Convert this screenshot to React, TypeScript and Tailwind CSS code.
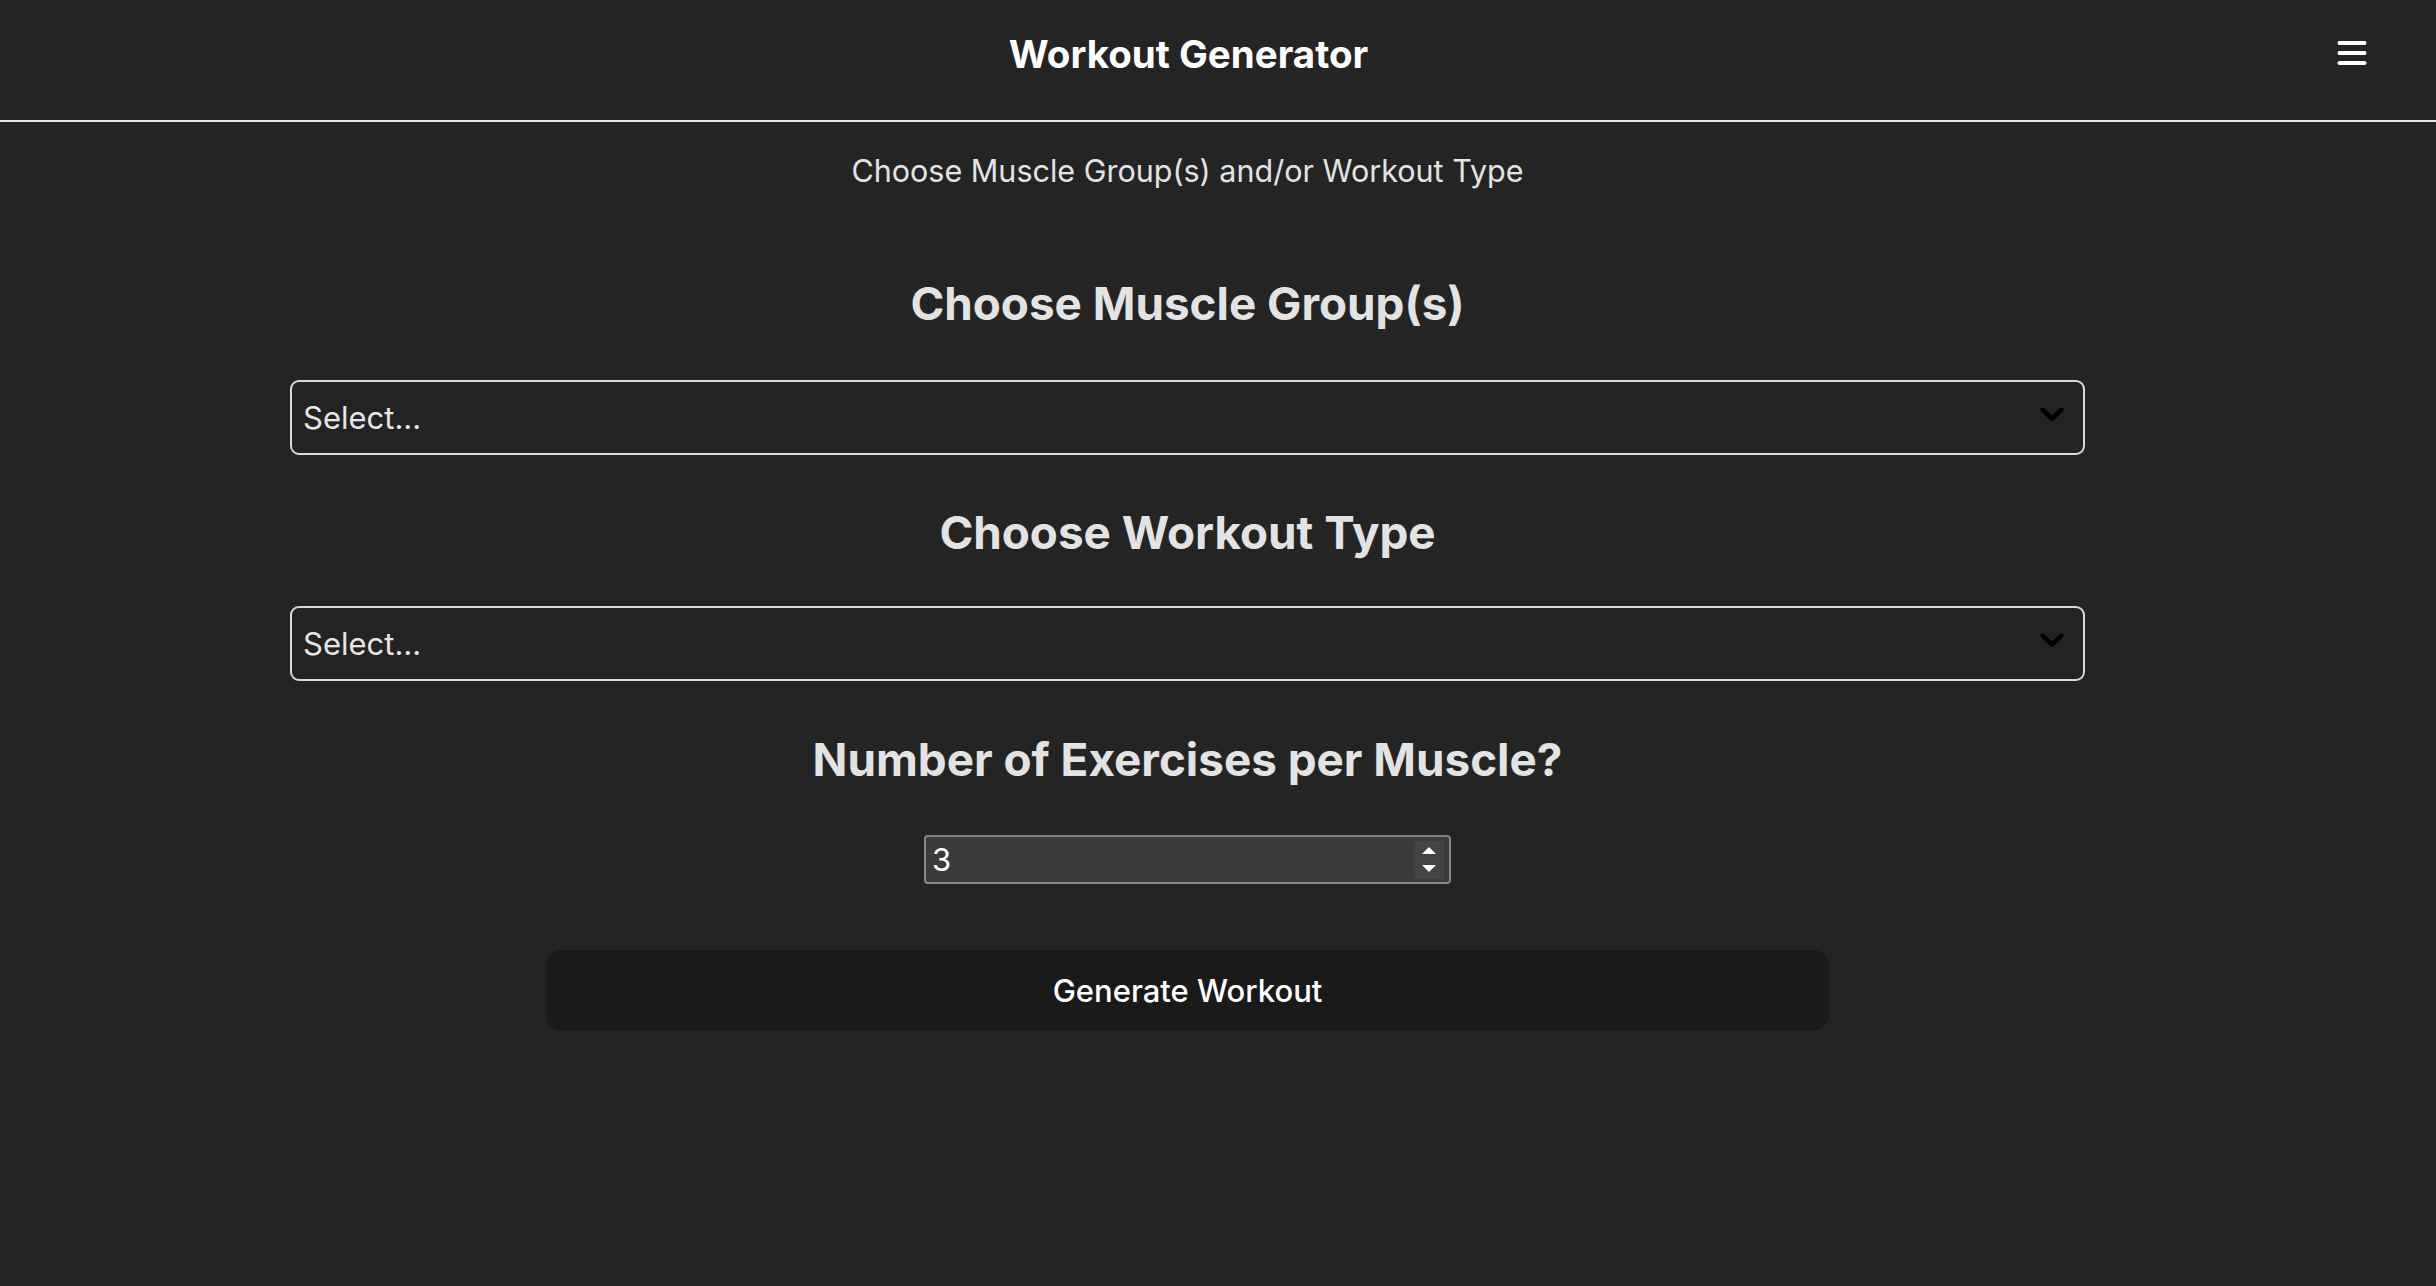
import React from "react";

const Chevron = () => (
  <svg viewBox="0 0 20 20" width="40" height="40" className="absolute right-[11px] top-[11px]" fill="#000">
    <path d="M4.516 7.548c0.436-0.446 1.043-0.481 1.576 0l3.908 3.747 3.908-3.747c0.533-0.481 1.141-0.446 1.574 0 0.436 0.445 0.408 1.197 0 1.615-0.406 0.418-4.695 4.502-4.695 4.502-0.217 0.223-0.502 0.335-0.787 0.335s-0.57-0.112-0.789-0.335c0 0-4.287-4.084-4.695-4.502s-0.436-1.17 0-1.615z" />
  </svg>
);

const SelectBox = ({ className }: { className: string }) => (
  <div className={`relative w-[1795px] h-[75px] border-2 border-[#d9d9d9] rounded-[9px] bg-[#232323] flex items-center pl-[11px] ${className}`}>
    <span className="text-[31px] text-[#e6e6e6] leading-none">Select...</span>
    <Chevron />
  </div>
);

export default function App() {
  return (
    <div
      className="min-h-screen bg-[#242424] text-[#e3e3e3]"
      style={{ fontFamily: "Inter, 'Noto Sans', sans-serif" }}
    >
      <header className="flex items-center h-[122px] pb-[12px] px-[55px] border-b-2 border-[#e6e6e6]">
        <div className="flex-1 text-center text-[38.5px] font-bold text-white leading-none">
          Workout Generator
        </div>
        <div className="w-[59px] flex justify-center mb-[2px]">
          <svg width="30" height="24" viewBox="0 0 30 24">
            <rect x="0.5" y="0" width="29" height="4" rx="2" fill="#fff" />
            <rect x="0.5" y="10" width="29" height="4" rx="2" fill="#fff" />
            <rect x="0.5" y="20" width="29" height="4" rx="2" fill="#fff" />
          </svg>
        </div>
      </header>
      <main className="w-[2375px] flex flex-col items-center">
        <p className="mt-[29px] h-[40px] leading-[40px] text-[30.5px]">
          Choose Muscle Group(s) and/or Workout Type
        </p>
        <h2 className="mt-[83px] h-[60px] leading-[60px] text-[45.8px] font-bold">
          Choose Muscle Group(s)
        </h2>
        <SelectBox className="mt-[46px]" />
        <h2 className="mt-[48px] h-[60px] leading-[60px] text-[45.8px] font-bold">
          Choose Workout Type
        </h2>
        <SelectBox className="mt-[43px]" />
        <h2 className="mt-[49px] h-[60px] leading-[60px] text-[45.8px] font-bold">
          Number of Exercises per Muscle?
        </h2>
        <div className="mt-[45px] w-[527px] h-[49px] border-2 border-[#858585] rounded-[4px] bg-[#3b3b3b] flex items-center pl-[6px] pr-[5px]">
          <span className="flex-1 text-[31px] text-white leading-none">3</span>
          <div className="w-[30px] h-[38px] bg-[#444444] flex flex-col items-center justify-center gap-[11px]">
            <svg width="14" height="7" viewBox="0 0 14 7">
              <polygon points="7,0 14,7 0,7" fill="#fff" />
            </svg>
            <svg width="14" height="7" viewBox="0 0 14 7">
              <polygon points="0,0 14,0 7,7" fill="#fff" />
            </svg>
          </div>
        </div>
        <button className="mt-[66px] w-[1283px] h-[81px] rounded-[16px] bg-[#1a1a1a] text-[31px] font-medium text-white leading-none">
          Generate Workout
        </button>
      </main>
    </div>
  );
}
